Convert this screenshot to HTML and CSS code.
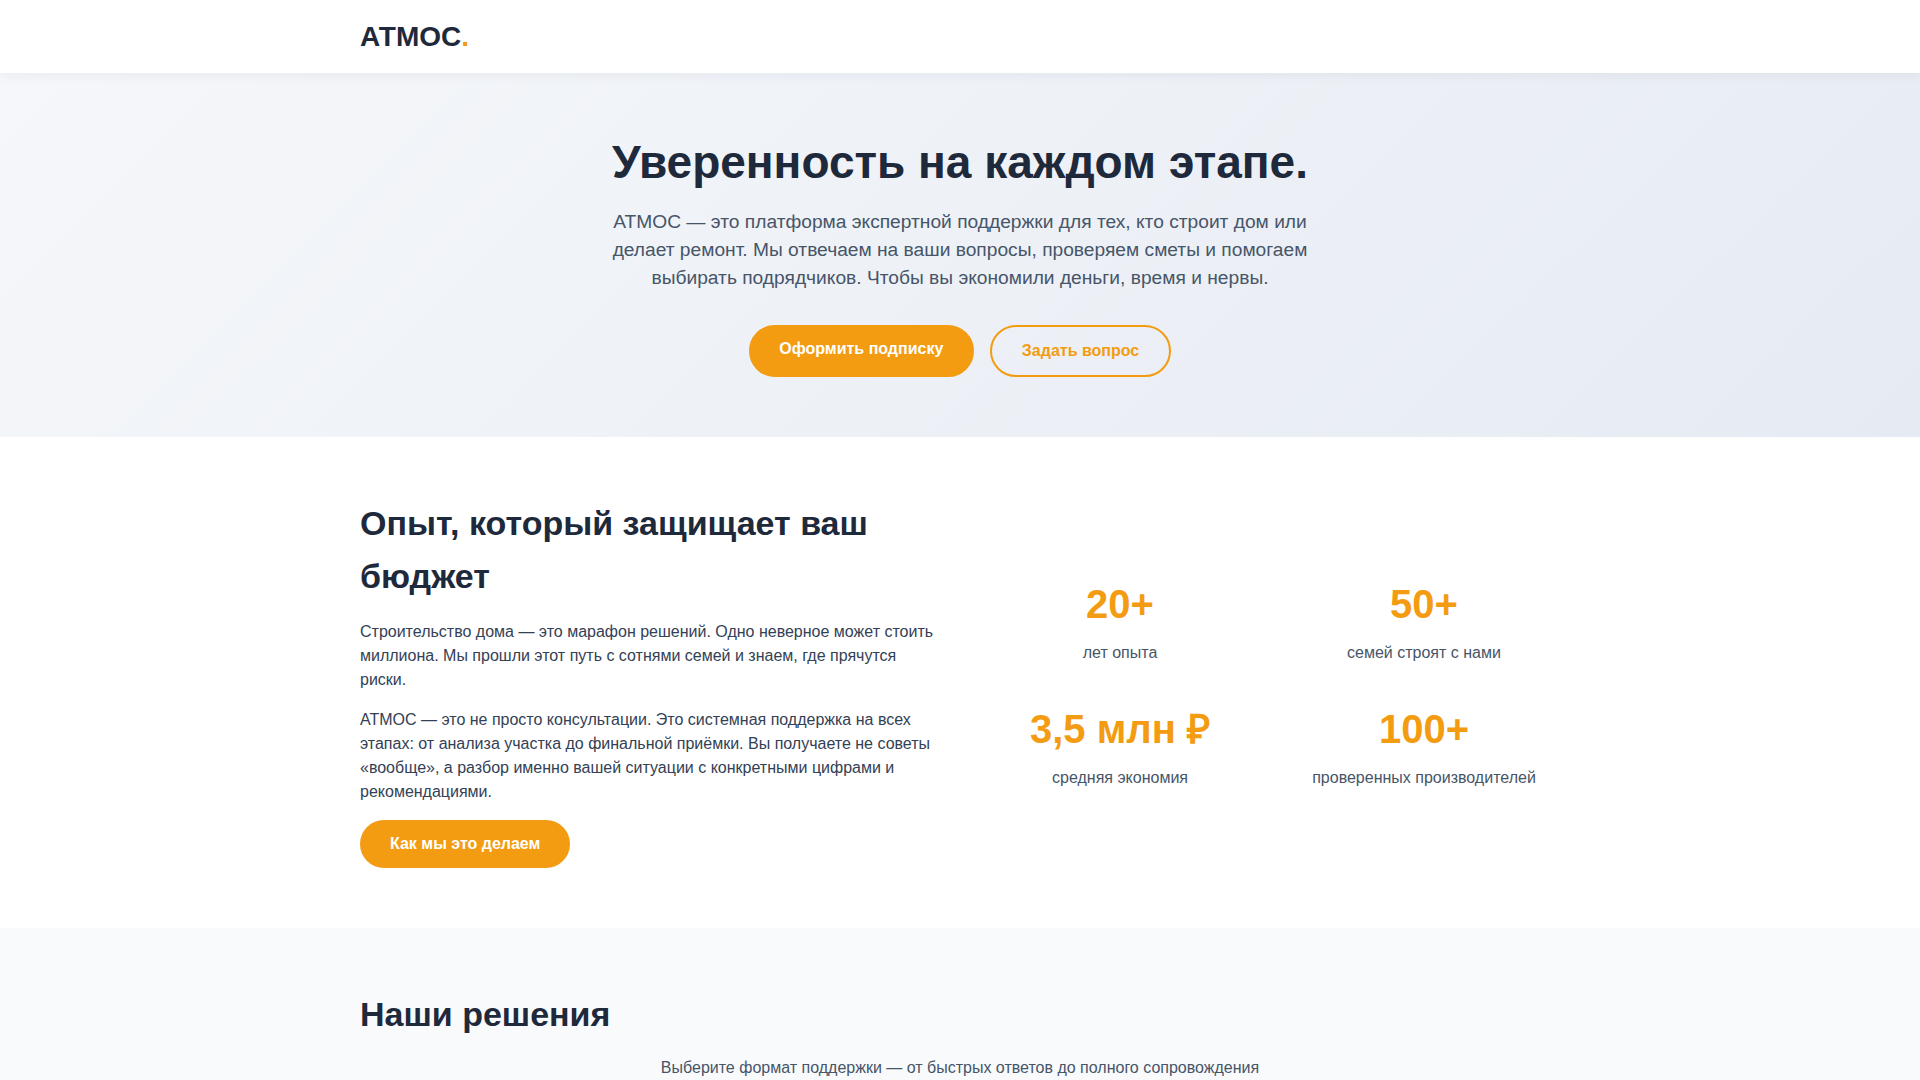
FILE: index.html
```html
<!DOCTYPE html>
<html lang="ru">
<head>
<meta charset="utf-8">
<title>АТМОС</title>
<link rel="stylesheet" href="styles.css">
</head>
<body>
<header class="site-header">
  <div class="container header-inner">
    <a class="logo" href="#">АТМОС<span class="logo-dot">.</span></a>
  </div>
</header>

<section class="hero">
  <div class="container hero-inner">
    <h1 class="hero-title">Уверенность на каждом этапе.</h1>
    <p class="hero-text">АТМОС — это платформа экспертной поддержки для тех, кто строит дом или делает ремонт. Мы отвечаем на ваши вопросы, проверяем сметы и помогаем выбирать подрядчиков. Чтобы вы экономили деньги, время и нервы.</p>
    <div class="hero-actions">
      <a class="btn btn-primary btn-hero" href="#">Оформить подписку</a>
      <a class="btn btn-outline" href="#">Задать вопрос</a>
    </div>
  </div>
</section>

<section class="about">
  <div class="container about-grid">
    <div class="about-text">
      <h2 class="section-title">Опыт, который защищает ваш бюджет</h2>
      <p>Строительство дома — это марафон решений. Одно неверное может стоить миллиона. Мы прошли этот путь с сотнями семей и знаем, где прячутся риски.</p>
      <p>АТМОС — это не просто консультации. Это системная поддержка на всех этапах: от анализа участка до финальной приёмки. Вы получаете не советы «вообще», а разбор именно вашей ситуации с конкретными цифрами и рекомендациями.</p>
      <a class="btn btn-primary btn-plain" href="#">Как мы это делаем</a>
    </div>
    <div class="stats">
      <div class="stat">
        <div class="stat-num">20+</div>
        <div class="stat-label">лет опыта</div>
      </div>
      <div class="stat">
        <div class="stat-num">50+</div>
        <div class="stat-label">семей строят с нами</div>
      </div>
      <div class="stat">
        <div class="stat-num">3,5 млн ₽</div>
        <div class="stat-label">средняя экономия</div>
      </div>
      <div class="stat">
        <div class="stat-num">100+</div>
        <div class="stat-label">проверенных производителей</div>
      </div>
    </div>
  </div>
</section>

<section class="solutions">
  <div class="container">
    <h2 class="section-title solutions-title">Наши решения</h2>
    <p class="solutions-sub">Выберите формат поддержки — от быстрых ответов до полного сопровождения</p>
  </div>
</section>
</body>
</html>
```

FILE: styles.css
```css
* { box-sizing: border-box; }

body {
  margin: 0;
  font-family: "Liberation Sans", Arial, sans-serif;
  color: #1e293b;
  background: #ffffff;
  line-height: 1.5;
}

.container {
  max-width: 1200px;
  margin: 0 auto;
}

.site-header {
  background: #ffffff;
  box-shadow: 0 2px 12px rgba(30, 41, 59, 0.06);
  position: relative;
  z-index: 2;
}

.header-inner {
  height: 73px;
  display: flex;
  align-items: center;
}

.logo {
  font-size: 28px;
  font-weight: 700;
  color: #1e293b;
  text-decoration: none;
  line-height: 1;
}

.logo-dot { color: #f39c12; }

.hero {
  background: linear-gradient(135deg, #f5f7fa 0%, #e6ebf3 100%);
  padding: 61px 0 60px;
}

.hero-inner {
  display: flex;
  flex-direction: column;
  align-items: center;
  text-align: center;
}

.hero-title {
  font-size: 46px;
  line-height: 1.25;
  font-weight: 700;
  margin: 0 0 16px;
  color: #1e293b;
}

.hero-text {
  max-width: 700px;
  font-size: 19.2px;
  line-height: 1.47;
  color: #475569;
  margin: 0 0 33px;
}

.hero-actions {
  display: flex;
  gap: 16px;
}

.btn {
  display: inline-block;
  font-size: 16px;
  font-weight: 700;
  line-height: 20px;
  padding: 14px 30px;
  border-radius: 30px;
  text-decoration: none;
  border: 2px solid #f39c12;
}

.btn-primary {
  background: #f39c12;
  color: #ffffff;
}

.btn-hero {
  padding: 12px 28.5px 16px;
}

.btn-outline {
  background: transparent;
  color: #f39c12;
  padding: 14px 30px;
}

.btn-plain {
  border: none;
  padding: 14px 30px;
}

.about {
  padding: 60px 0;
  background: #ffffff;
}

.about-grid {
  display: grid;
  grid-template-columns: 1fr 1fr;
  gap: 48px;
  align-items: center;
}

.section-title {
  font-size: 34px;
  line-height: 1.55;
  font-weight: 700;
  margin: 0 0 17px;
  color: #1e293b;
}

.about-text p {
  font-size: 16px;
  line-height: 24px;
  color: #334155;
  margin: 0 0 16px;
}

.stats {
  display: grid;
  grid-template-columns: 1fr 1fr;
  column-gap: 32px;
  row-gap: 40px;
  padding-top: 6px;
}

.stat {
  text-align: center;
}

.stat-num {
  font-size: 40px;
  font-weight: 700;
  line-height: 48px;
  color: #f39c12;
  margin-bottom: 13px;
}

.stat-label {
  font-size: 16px;
  color: #475569;
  line-height: 24px;
}

.solutions {
  background: #f8fafc;
  padding: 60px 0;
}

.solutions-title {
  margin: 0 0 16px;
}

.solutions-sub {
  text-align: center;
  font-size: 16px;
  color: #475569;
  margin: 0;
}
```
